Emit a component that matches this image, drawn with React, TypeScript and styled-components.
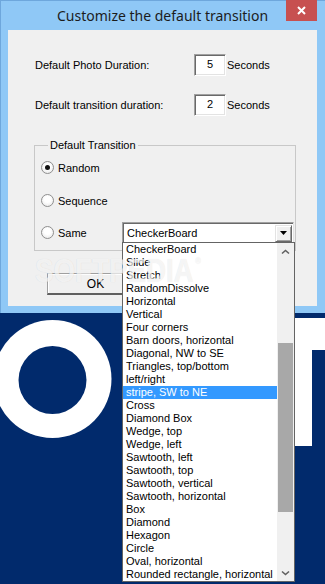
import styled, { createGlobalStyle } from "styled-components";

const GlobalStyle = createGlobalStyle`
  html, body { margin: 0; padding: 0; }
  body {
    background: #012a6c;
    font-family: "Liberation Sans", Arial, sans-serif;
    font-size: 11px;
    color: #000;
  }
`;

const Screen = styled.div`
  position: relative;
  width: 325px;
  height: 584px;
  overflow: hidden;
  background: #012a6c;
`;

const Backdrop = styled.svg`
  position: absolute;
  left: 0;
  top: 0;
`;

const Watermark = styled.div`
  position: absolute;
  left: 35px;
  top: 254px;
  z-index: 10;
  pointer-events: none;
  font-family: "Liberation Sans", Arial, sans-serif;
  font-weight: 700;
  font-size: 33px;
  line-height: 33px;
  color: rgba(255, 255, 255, 0.7);
  text-shadow: 0 0 1px rgba(0, 0, 0, 0.12);
  transform: scaleX(0.84);
  transform-origin: left top;
  white-space: nowrap;

  sup {
    font-size: 9px;
    vertical-align: top;
    line-height: 14px;
    margin-left: 2px;
  }
`;

const Window = styled.div`
  position: relative;
  width: 325px;
  box-sizing: border-box;
  background: #8fc8f6;
  border-top: 1px solid #6ea7dc;
  border-left: 1px solid #6ea7dc;
  padding: 0 8px 7px 7px;
`;

const TitleBar = styled.div`
  display: grid;
  grid-template-columns: 31px 1fr 31px;
  height: 29px;
`;

const Title = styled.div`
  font-family: "Noto Sans", "Open Sans", sans-serif;
  font-size: 14px;
  color: #1c1c1c;
  text-align: center;
  line-height: 29px;
`;

const CloseButton = styled.div`
  margin-top: -1px;
  height: 21px;
  background: #c75050;
  display: flex;
  align-items: center;
  justify-content: center;
`;

const Client = styled.div`
  height: 276px;
  box-sizing: border-box;
  background: #f0f0f0;
  padding: 24px 0 0 26px;
  display: flex;
  flex-direction: column;
`;

const FieldRow = styled.div<{ $gap?: number }>`
  display: grid;
  grid-template-columns: 159px 32px auto;
  align-items: center;
  height: 22px;
  margin-left: 1px;
  margin-bottom: ${(p) => p.$gap ?? 0}px;
`;

const NumberBox = styled.div`
  box-sizing: border-box;
  height: 22px;
  background: #fff;
  border-top: 1px solid #a0a0a0;
  border-left: 1px solid #a0a0a0;
  border-right: 1px solid #fff;
  border-bottom: 1px solid #fff;
  box-shadow: inset 1px 1px 0 #696969, inset -1px -1px 0 #e3e3e3;
  text-align: center;
  line-height: 19px;
`;

const Unit = styled.span`
  padding-left: 1px;
`;

const Group = styled.fieldset`
  margin: 22px 0 0 0;
  padding: 0 0 7px 6px;
  width: 262px;
  box-sizing: border-box;
  border: 1px solid #c8c8c8;
  display: flex;
  flex-direction: column;
`;

const Legend = styled.legend`
  margin-left: 7px;
  padding: 0 2px;
  line-height: 14px;
`;

const RadioRow = styled.label<{ $top: number }>`
  display: flex;
  align-items: center;
  height: 21px;
  margin-top: ${(p) => p.$top}px;
`;

const RadioDot = styled.span<{ $checked?: boolean }>`
  width: 13px;
  height: 13px;
  box-sizing: border-box;
  border-radius: 50%;
  border: 1px solid #8f8f8f;
  background: radial-gradient(circle at 50% 40%, #ffffff 35%, #e2e2e2 100%);
  display: flex;
  align-items: center;
  justify-content: center;
  margin-right: 4px;
  &::after {
    content: "";
    width: 5px;
    height: 5px;
    border-radius: 50%;
    background: #111;
    display: ${(p) => (p.$checked ? "block" : "none")};
  }
`;

const Combo = styled.div`
  position: relative;
  margin-left: auto;
  margin-right: 1px;
  width: 172px;
  height: 21px;
  box-sizing: border-box;
  background: #fff;
  border-top: 1px solid #a0a0a0;
  border-left: 1px solid #a0a0a0;
  border-right: 1px solid #e3e3e3;
  border-bottom: 1px solid #e3e3e3;
  box-shadow: inset 1px 1px 0 #696969;
  display: flex;
  align-items: center;
  padding: 1px 1px 0 4px;
`;

const ComboText = styled.span`
  flex: 1;
`;

const ComboArrow = styled.div`
  width: 17px;
  height: 17px;
  box-sizing: border-box;
  background: #f0f0f0;
  border-top: 1px solid #e3e3e3;
  border-left: 1px solid #e3e3e3;
  border-right: 1px solid #696969;
  border-bottom: 1px solid #696969;
  box-shadow: inset 1px 1px 0 #fff, inset -1px -1px 0 #a0a0a0;
  display: flex;
  align-items: center;
  justify-content: center;
`;

const DropList = styled.div`
  position: absolute;
  top: 100%;
  left: -1px;
  width: 173px;
  box-sizing: border-box;
  background: #fff;
  border: 1px solid #646464;
  display: flex;
  z-index: 5;
`;

const Items = styled.div`
  flex: 1;
  display: flex;
  flex-direction: column;
`;

const Item = styled.div<{ $selected?: boolean }>`
  height: 13px;
  line-height: 13px;
  padding-left: 3px;
  white-space: nowrap;
  overflow: hidden;
  background: ${(p) => (p.$selected ? "#3399ff" : "transparent")};
  color: ${(p) => (p.$selected ? "#fff" : "#000")};
`;

const ScrollBar = styled.div`
  width: 17px;
  background: #f0f0f0;
  display: flex;
  flex-direction: column;
`;

const ScrollArrow = styled.div`
  height: 17px;
  display: flex;
  align-items: center;
  justify-content: center;
`;

const Track = styled.div`
  flex: 1;
  padding: 0 1px;
`;

const Thumb = styled.div<{ $offset: number; $size: number }>`
  margin-top: ${(p) => p.$offset}px;
  height: ${(p) => p.$size}px;
  background: #a8a8a8;
`;

const OkButton = styled.button`
  margin: 22px 0 0 13px;
  width: 98px;
  height: 22px;
  box-sizing: border-box;
  background: #f0f0f0;
  border-top: 1px solid #a0a0a0;
  border-left: 1px solid #a0a0a0;
  border-right: 2px solid #5f5f5f;
  border-bottom: 2px solid #5f5f5f;
  box-shadow: inset 1px 1px 0 #fff;
  font-family: "Liberation Sans", Arial, sans-serif;
  font-size: 12px;
  color: #000;
  padding: 0;
`;

const transitions = [
  "CheckerBoard",
  "Slide",
  "Stretch",
  "RandomDissolve",
  "Horizontal",
  "Vertical",
  "Four corners",
  "Barn doors, horizontal",
  "Diagonal, NW to SE",
  "Triangles, top/bottom",
  "left/right",
  "stripe, SW to NE",
  "Cross",
  "Diamond Box",
  "Wedge, top",
  "Wedge, left",
  "Sawtooth, left",
  "Sawtooth, top",
  "Sawtooth, vertical",
  "Sawtooth, horizontal",
  "Box",
  "Diamond",
  "Hexagon",
  "Circle",
  "Oval, horizontal",
  "Rounded rectangle, horizontal",
];

function Chevron({ down }: { down?: boolean }) {
  return (
    <svg width="9" height="6" viewBox="0 0 9 6">
      <polyline
        points={down ? "1,1.5 4.5,4.5 8,1.5" : "1,4.5 4.5,1.5 8,4.5"}
        fill="none"
        stroke="#606060"
        strokeWidth="1.6"
      />
    </svg>
  );
}

export default function App() {
  return (
    <Screen>
      <GlobalStyle />
      <Backdrop width="325" height="584" viewBox="0 0 325 584">
        <circle cx="52.5" cy="379" r="59" fill="#fff" />
        <circle cx="52.5" cy="380" r="34" fill="#012a6c" />
        <rect x="285" y="318" width="40" height="32" fill="#fff" />
        <rect x="285" y="318" width="27" height="128" fill="#fff" />
      </Backdrop>
      <Window>
        <TitleBar>
          <span />
          <Title>Customize the default transition</Title>
          <CloseButton>
            <svg width="9" height="9" viewBox="0 0 9 9">
              <path d="M1 1L8 8M8 1L1 8" stroke="#fff" strokeWidth="2" />
            </svg>
          </CloseButton>
        </TitleBar>
        <Client>
          <FieldRow $gap={18}>
            <span>Default Photo Duration:</span>
            <NumberBox>5</NumberBox>
            <Unit>Seconds</Unit>
          </FieldRow>
          <FieldRow>
            <span>Default transition duration:</span>
            <NumberBox>2</NumberBox>
            <Unit>Seconds</Unit>
          </FieldRow>
          <Group>
            <Legend>Default Transition</Legend>
            <RadioRow $top={5}>
              <RadioDot $checked />
              Random
            </RadioRow>
            <RadioRow $top={12}>
              <RadioDot />
              Sequence
            </RadioRow>
            <RadioRow $top={11}>
              <RadioDot />
              Same
              <Combo>
                <ComboText>CheckerBoard</ComboText>
                <ComboArrow>
                  <svg width="7" height="4" viewBox="0 0 7 4">
                    <path d="M0 0H7L3.5 4Z" fill="#000" />
                  </svg>
                </ComboArrow>
                <DropList>
                  <Items>
                    {transitions.map((t) => (
                      <Item key={t} $selected={t === "stripe, SW to NE"}>
                        {t}
                      </Item>
                    ))}
                  </Items>
                  <ScrollBar>
                    <ScrollArrow>
                      <Chevron />
                    </ScrollArrow>
                    <Track>
                      <Thumb $offset={83} $size={169} />
                    </Track>
                    <ScrollArrow>
                      <Chevron down />
                    </ScrollArrow>
                  </ScrollBar>
                </DropList>
              </Combo>
            </RadioRow>
          </Group>
          <OkButton>OK</OkButton>
        </Client>
      </Window>
      <Watermark>
        SOFTPEDIA<sup>®</sup>
      </Watermark>
    </Screen>
  );
}
